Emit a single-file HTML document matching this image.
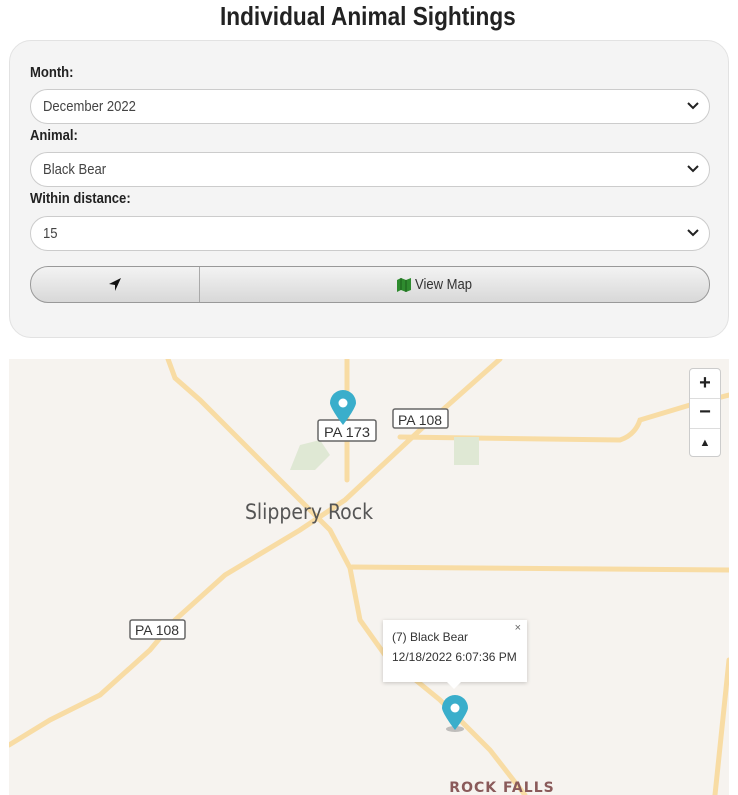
<!DOCTYPE html>
<html><head><meta charset="utf-8"><style>
body{margin:0;width:738px;height:795px;overflow:hidden;background:#fff;font-family:"Liberation Sans",sans-serif;color:#222}
.c{display:inline-block;transform:scaleX(.87);transform-origin:left center;white-space:nowrap}
h1{margin:0;position:absolute;top:0;left:220px;font-size:26px;line-height:32px;font-weight:bold;color:#222;transform:scaleX(.87);transform-origin:left center;white-space:nowrap}
.card{position:absolute;left:9px;top:40px;width:720px;height:298px;background:#f4f4f4;border:1px solid #e2e2e2;border-radius:22px;box-sizing:border-box}
.lbl{position:absolute;left:20px;font-size:15px;font-weight:bold;color:#222}
.sel{position:absolute;left:20px;width:680px;height:35px;background:#fff;border:1px solid #ccc;border-radius:18px;box-sizing:border-box;font-size:15px;color:#444;line-height:33px;padding-left:12px}
.sel svg{position:absolute;right:10px;top:12px}
.btn{position:absolute;left:20px;top:225px;width:680px;height:37px;border:1px solid #999;border-radius:18px;box-sizing:border-box;background:linear-gradient(#f3f3f3,#d8d8d8);overflow:hidden}
.btn .div{position:absolute;left:168px;top:0;width:1px;height:100%;background:#aaa}
.btn .vm{position:absolute;left:384px;top:9px;font-size:15px;color:#333}
.map{position:absolute;left:9px;top:359px;width:720px;height:436px;background:#f6f3ef;overflow:hidden}
</style></head><body>
<h1>Individual Animal Sightings</h1>
<div class="card">
<div class="lbl" style="top:23px"><span class="c">Month:</span></div>
<div class="sel" style="top:48px"><span class="c">December 2022</span><svg width="12" height="8"><path d="M1 1L6 6L11 1" stroke="#222" stroke-width="2" fill="none"/></svg></div>
<div class="lbl" style="top:86px"><span class="c">Animal:</span></div>
<div class="sel" style="top:111px"><span class="c">Black Bear</span><svg width="12" height="8"><path d="M1 1L6 6L11 1" stroke="#222" stroke-width="2" fill="none"/></svg></div>
<div class="lbl" style="top:149px"><span class="c">Within distance:</span></div>
<div class="sel" style="top:175px"><span class="c">15</span><svg width="12" height="8"><path d="M1 1L6 6L11 1" stroke="#222" stroke-width="2" fill="none"/></svg></div>
<div class="btn"><svg style="position:absolute;left:76px;top:10px" width="16" height="16"><path d="M14 1L2 7L8 8L8 14Z" fill="#111"/></svg><div class="div"></div>
<svg style="position:absolute;left:365px;top:10px" width="16" height="16"><path d="M1 3L5 1L10 3L15 1L15 13L10 15L5 13L1 15Z" fill="#2e8b2e"/><path d="M5 1V13M10 3V15" stroke="#1b5e1b" stroke-width="1"/></svg>
<div class="vm"><span class="c">View Map</span></div></div>
</div>
<div class="map">
<svg width="720" height="436" viewBox="9 359 720 436" style="position:absolute;left:0;top:0">
<g fill="none" stroke="#f8dca4" stroke-width="5" stroke-linecap="round">
<path d="M168 359L175 378L200 400L260 460L300 500L330 530L350 568L360 620L385 655L440 700L490 750L525 795"/>
<path d="M500 359L420 430L345 500L300 530L225 575L175 620L150 650L100 695L50 720L9 745"/>
<path d="M347 359V480"/>
<path d="M400 437L620 440Q635 435 640 420L690 405L729 395"/>
<path d="M352 567L729 570"/>
<path d="M729 660L715 795"/>
</g>
<rect x="454" y="437" width="25" height="28" fill="#dfe8d4"/>
<path d="M290 470L300 445L320 440L330 455L315 470Z" fill="#dfe8d4"/>
<rect x="318" y="420" width="58" height="21" fill="#fff" stroke="#666" stroke-width="1.5" rx="2"/>
<text x="347" y="437" font-size="14" text-anchor="middle" fill="#333" font-family="Liberation Sans,sans-serif" textLength="46" lengthAdjust="spacingAndGlyphs">PA 173</text>
<rect x="393" y="409" width="55" height="19" fill="#fff" stroke="#666" stroke-width="1.5" rx="2"/>
<text x="420" y="425" font-size="14" text-anchor="middle" fill="#333" font-family="Liberation Sans,sans-serif" textLength="44" lengthAdjust="spacingAndGlyphs">PA 108</text>
<rect x="130" y="620" width="55" height="19" fill="#fff" stroke="#666" stroke-width="1.5" rx="2"/>
<text x="157" y="635" font-size="14" text-anchor="middle" fill="#333" font-family="Liberation Sans,sans-serif" textLength="44" lengthAdjust="spacingAndGlyphs">PA 108</text>
<text x="309" y="519" font-size="21" text-anchor="middle" fill="#555" font-family="DejaVu Sans Condensed,Liberation Sans,sans-serif">Slippery Rock</text>
<text x="502" y="792" font-size="14" font-weight="bold" text-anchor="middle" fill="#8a5a5a" letter-spacing="1" font-family="DejaVu Sans,sans-serif">ROCK FALLS</text>
<path d="M343 425C333 412 330 405 330 403A13 13 0 0 1 356 403C356 405 353 412 343 425Z" fill="#3aaecb"/><circle cx="343" cy="403" r="4.5" fill="#fff"/>
<ellipse cx="455" cy="729" rx="9" ry="3" fill="#888" opacity=".5"/>
<path d="M455 730C445 717 442 710 442 708A13 13 0 0 1 468 708C468 710 465 717 455 730Z" fill="#3aaecb"/><circle cx="455" cy="708" r="4.5" fill="#fff"/>
</svg>
<div style="position:absolute;left:374px;top:261px;width:144px;height:62px;background:#fff;box-shadow:0 1px 4px rgba(0,0,0,.2);font-family:'Liberation Sans',sans-serif;font-size:12px;color:#333">
<div style="position:absolute;left:9px;top:10px">(7) Black Bear</div>
<div style="position:absolute;left:9px;top:30px">12/18/2022 6:07:36 PM</div>
<div style="position:absolute;right:6px;top:2px;font-size:11px;color:#666">×</div>
<div style="position:absolute;left:64px;bottom:-7px;width:0;height:0;border-left:7px solid transparent;border-right:7px solid transparent;border-top:7px solid #fff"></div>
</div>
<div style="position:absolute;left:680px;top:9px;width:30px;height:87px;background:#fff;border:1px solid #ccc;border-radius:4px;font-family:'Liberation Sans',sans-serif;font-weight:bold;text-align:center;color:#222">
<div style="height:29px;line-height:29px;font-size:20px;border-bottom:1px solid #ddd">+</div>
<div style="height:29px;line-height:27px;font-size:20px;border-bottom:1px solid #ddd">−</div>
<div style="height:28px;line-height:28px;font-size:11px">▲</div></div>
</div>
</body></html>
